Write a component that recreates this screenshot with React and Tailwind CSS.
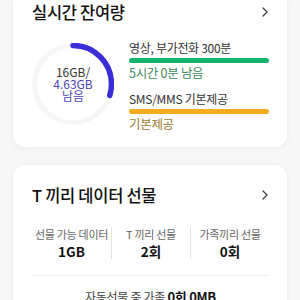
import React from 'react';

const font = { fontFamily: '"Noto Sans CJK KR", "Noto Sans", sans-serif' };

const Chevron = () => (
  <svg width="8" height="12" viewBox="0 0 8 12" className="text-[#444]">
    <polyline points="2,2 6,6 2,10" fill="none" stroke="currentColor" strokeWidth="1.3" strokeLinecap="round" strokeLinejoin="round" />
  </svg>
);

const Donut = () => {
  const r = 38.5;
  const c = 2 * Math.PI * r;
  const arc = (107 / 360) * c;
  return (
    <div className="relative w-[82px] h-[82px] shrink-0">
      <svg width="82" height="82" viewBox="0 0 82 82">
        <circle cx="41" cy="41" r={r} fill="none" stroke="#f6f6f8" strokeWidth="5" />
        <circle
          cx="41"
          cy="41"
          r={r}
          fill="none"
          stroke="#3a2fd6"
          strokeWidth="5.5"
          strokeLinecap="round"
          strokeDasharray={`${arc} ${c}`}
          transform="rotate(-90 41 41)"
        />
      </svg>
      <div className="absolute inset-0 flex flex-col items-center justify-center text-[12px] leading-[12px] -mt-[1px]">
        <span className="text-[#333]">16GB/</span>
        <span className="text-[#4d45b3]">4.63GB</span>
        <span className="text-[#4d45b3]">남음</span>
      </div>
    </div>
  );
};

const stats = [
  { label: '선물 가능 데이터', value: '1GB' },
  { label: 'T 끼리 선물', value: '2회' },
  { label: '가족끼리 선물', value: '0회' },
];

const App = () => {
  return (
    <div className="w-[300px] h-[300px] overflow-hidden bg-[#f7f7f7] px-[13px]" style={font}>
      <div className="bg-white rounded-b-[12px] shadow-[0_1px_6px_rgba(0,0,0,0.06)] h-[147px] px-[19px] pr-[18px]">
        <div className="flex items-center justify-between h-[24px]">
          <h2 className="text-[16.5px] font-medium text-[#111] tracking-[-0.3px]">실시간 잔여량</h2>
          <Chevron />
        </div>
        <div className="flex mt-[19px]">
          <Donut />
          <div className="flex-1 ml-[15px] -mt-[3px]">
            <p className="text-[12px] leading-[16px] text-[#333] tracking-[-0.3px]">영상, 부가전화 300분</p>
            <div className="h-[5px] rounded-full bg-[#12b36a] mt-[2px]"></div>
            <p className="text-[12.5px] leading-[16px] text-[#3f8a5e] mt-[2px] tracking-[-0.3px]">5시간 0분 남음</p>
            <p className="text-[12px] leading-[16px] text-[#333] mt-[10px] tracking-[-0.3px]">SMS/MMS 기본제공</p>
            <div className="h-[5px] rounded-full bg-[#f7ab1f] mt-[2px]"></div>
            <p className="text-[12.5px] leading-[16px] text-[#9a7a30] mt-[2px] tracking-[-0.3px]">기본제공</p>
          </div>
        </div>
      </div>

      <div className="bg-white rounded-[12px] shadow-[0_1px_6px_rgba(0,0,0,0.06)] mt-[18px] h-[160px] pl-[19px] pr-[18px] pt-[20px]">
        <div className="flex items-center justify-between h-[20px]">
          <h2 className="text-[16.5px] font-medium text-[#111] tracking-[-0.3px]">T 끼리 데이터 선물</h2>
          <Chevron />
        </div>
        <div className="grid grid-cols-3 mt-[22px]">
          {stats.map((s, i) => (
            <div
              key={i}
              className={`flex flex-col items-center gap-[4px] py-[1px] ${i > 0 ? 'border-l border-[#e2e2e2]' : ''}`}
            >
              <span className="text-[11px] leading-[12px] text-[#666] tracking-[-0.3px]">{s.label}</span>
              <span className="text-[13.5px] leading-[14px] font-bold text-[#111]">{s.value}</span>
            </div>
          ))}
        </div>
        <div className="border-t border-[#eeeeee] mt-[16px]"></div>
        <p className="text-center text-[12px] text-[#444] mt-[11px] tracking-[-0.3px]">
          자동선물 중 가족 <span className="font-bold text-[13px] text-[#111]">0회 0MB</span>
        </p>
      </div>
    </div>
  );
};

export default App;
